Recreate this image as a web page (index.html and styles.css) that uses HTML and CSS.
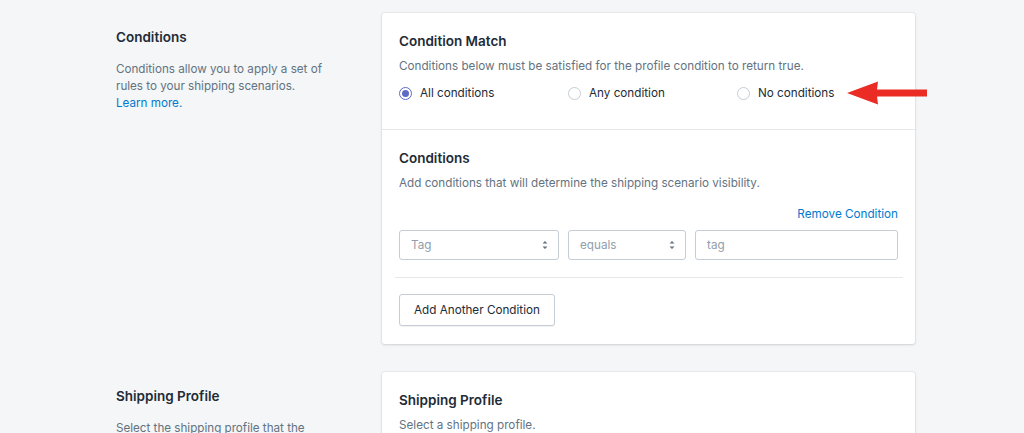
FILE: index.html
```html
<!DOCTYPE html>
<html>
<head>
<meta charset="utf-8">
<link rel="stylesheet" href="styles.css">
</head>
<body>
<div class="page">
  <div class="layout-section">
    <div class="aside">
      <h2 class="aside-title">Conditions</h2>
      <p class="aside-text">Conditions allow you to apply a set of rules to your shipping scenarios.<br><a class="link" href="#">Learn more.</a></p>
    </div>
    <div class="card">
      <div class="card-section">
        <h3 class="card-title">Condition Match</h3>
        <p class="card-sub">Conditions below must be satisfied for the profile condition to return true.</p>
        <div class="radios">
          <label class="radio"><span class="radio-btn checked"></span>All conditions</label>
          <label class="radio"><span class="radio-btn"></span>Any condition</label>
          <label class="radio"><span class="radio-btn"></span>No conditions</label>
        </div>
      </div>
      <div class="card-section second">
        <h3 class="card-title">Conditions</h3>
        <p class="card-sub">Add conditions that will determine the shipping scenario visibility.</p>
        <div class="remove-row"><a class="link" href="#">Remove Condition</a></div>
        <div class="fields">
          <div class="select sel-tag"><span>Tag</span><svg width="6" height="10" viewBox="0 0 6 10"><path d="M3 1 L5.5 3.5 H0.5 Z M3 9 L5.5 6.5 H0.5 Z" fill="#637381"/></svg></div>
          <div class="select sel-eq"><span>equals</span><svg width="6" height="10" viewBox="0 0 6 10"><path d="M3 1 L5.5 3.5 H0.5 Z M3 9 L5.5 6.5 H0.5 Z" fill="#637381"/></svg></div>
          <div class="select input"><span>tag</span></div>
        </div>
        <div class="divider"></div>
        <button class="btn">Add Another Condition</button>
      </div>
    </div>
  </div>
  <div class="layout-section next">
    <div class="aside">
      <h2 class="aside-title">Shipping Profile</h2>
      <p class="aside-text">Select the shipping profile that the</p>
    </div>
    <div class="card">
      <div class="card-section">
        <h3 class="card-title">Shipping Profile</h3>
        <p class="card-sub">Select a shipping profile.</p>
      </div>
    </div>
  </div>
  <svg class="arrow" width="82" height="26" viewBox="0 0 82 26"><path d="M0 13 L31 1.5 L30 9.5 L80 9.5 L80 16.5 L30 16.5 L31 24.5 Z" fill="#ea2c25"/></svg>
</div>
</body>
</html>
```
FILE: styles.css
```css
* { box-sizing: border-box; }
html, body { margin: 0; padding: 0; }
body {
  background: #f4f6f8;
  font-family: Inter, "Open Sans", "Liberation Sans", sans-serif;
  color: #212b36;
  overflow: hidden;
  height: 433px;
}
.page { position: relative; height: 433px; overflow: hidden; padding: 13px 0 0 116px; }
.layout-section { display: flex; }
.layout-section.next { margin-top: 28px; }
.aside { width: 266px; padding-top: 14px; }
.aside-title { margin: 0; font-size: 13.5px; font-weight: 600; line-height: 20px; }
.aside-text { margin: 14px 0 0; font-size: 11.65px; line-height: 17px; color: #637381; width: 230px; }
.link { color: #007ace; text-decoration: none; }
.card {
  width: 533px;
  background: #fff;
  border-radius: 3px;
  box-shadow: 0 0 0 1px rgba(63,63,68,0.05), 0 1px 3px 0 rgba(63,63,68,0.15);
}
.card-section { padding: 18px 17px 27px; }
.card-section.second { border-top: 1px solid #e5e8eb; padding-bottom: 18px; }
.card-title { margin: 0; font-size: 13.5px; font-weight: 600; line-height: 20px; }
.card-sub { margin: 7px 0 0; font-size: 11.7px; line-height: 17px; color: #637381; }
.radios { display: flex; margin-top: 10px; }
.radio { display: flex; align-items: center; gap: 8px; font-size: 11.7px; line-height: 17px; color: #212b36; width: 169px; flex-shrink: 0; }
.radio-btn { width: 13px; height: 13px; border-radius: 50%; border: 1px solid #c4cdd5; background: #fff; display: inline-flex; align-items: center; justify-content: center; }
.radio-btn.checked { border-color: #5c6ac4; }
.radio-btn.checked::after { content: ""; width: 7px; height: 7px; border-radius: 50%; background: #5c6ac4; }
.remove-row { display: flex; justify-content: flex-end; margin-top: 14px; font-size: 11.7px; line-height: 17px; }
.fields { display: flex; gap: 9px; margin-top: 7px; }
.select {
  height: 30px; border: 1px solid #c4cdd5; border-radius: 3px; background: #fff;
  display: flex; align-items: center; justify-content: space-between;
  padding: 0 10px 0 11px; font-size: 11.7px; color: #919eab;
}
.sel-tag { width: 160px; }
.sel-eq { width: 118px; }
.input { flex: 1; justify-content: flex-start; }
.divider { height: 1px; background: #e5e8eb; margin: 17px -5px 16px -4px; }
.btn {
  height: 32px; padding: 0 14px; font: inherit; font-size: 11.7px; color: #212b36;
  background: #fff; border: 1px solid #c4cdd5; border-radius: 3px;
  box-shadow: 0 1px 0 rgba(22,29,37,0.05);
}
.arrow { position: absolute; left: 847px; top: 80px; }
```
